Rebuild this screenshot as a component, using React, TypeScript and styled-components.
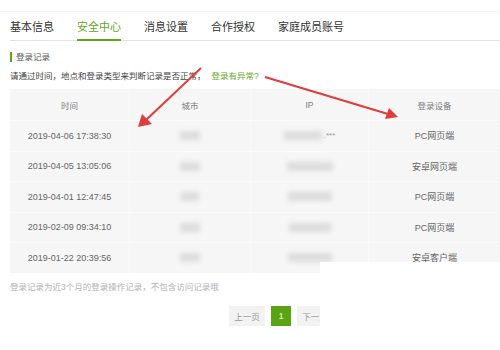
import { Fragment } from "react";
import styled, { createGlobalStyle } from "styled-components";

const GlobalStyle = createGlobalStyle`
  body {
    margin: 0;
    background: #fff;
    font-family: "Liberation Sans", "Noto Sans CJK SC", sans-serif;
  }
`;

const GREEN = "#5fa51c";

interface LoginRecord {
  time: string;
  cityWidth: number;
  ipWidth: number;
  masked?: boolean;
  device: string;
}

const records: LoginRecord[] = [
  { time: "2019-04-06 17:38:30", cityWidth: 20, ipWidth: 38, masked: true, device: "PC网页端" },
  { time: "2019-04-05 13:05:06", cityWidth: 20, ipWidth: 46, device: "安卓网页端" },
  { time: "2019-04-01 12:47:45", cityWidth: 18, ipWidth: 44, device: "PC网页端" },
  { time: "2019-02-09 09:34:10", cityWidth: 20, ipWidth: 42, device: "PC网页端" },
  { time: "2019-01-22 20:39:56", cityWidth: 20, ipWidth: 44, device: "安卓客户端" },
];

const tabs = ["基本信息", "安全中心", "消息设置", "合作授权", "家庭成员账号"];

const Page = styled.div`
  position: relative;
  width: 500px;
  height: 350px;
  overflow: hidden;
  padding-left: 10px;
  box-sizing: border-box;
`;

const TopRule = styled.div`
  height: 11px;
  margin-left: -10px;
  border-bottom: 1px solid #f4f4f4;
`;

const Tabs = styled.div`
  display: flex;
  gap: 23px;
  height: 28px;
  border-bottom: 1px solid #e3e3e3;
`;

const Tab = styled.div<{ $active?: boolean }>`
  display: flex;
  align-items: center;
  font-size: 11px;
  color: ${({ $active }) => ($active ? GREEN : "#333")};
  border-bottom: 2px solid ${({ $active }) => ($active ? GREEN : "transparent")};
  margin-bottom: -1px;
`;

const SectionTitle = styled.div`
  margin-top: 11px;
  border-left: 2px solid ${GREEN};
  padding-left: 4px;
  font-size: 8.5px;
  line-height: 10px;
  color: #555;
`;

const Desc = styled.div`
  margin-top: 9px;
  font-size: 8.5px;
  line-height: 10px;
  color: #444;
`;

const Link = styled.span`
  margin-left: 6px;
  color: #6aaa2e;
`;

const Table = styled.div`
  margin-top: 8px;
  display: grid;
  grid-template-columns: 119px 121px 118px 1fr;
  background: #f6f6f6;
`;

const Cell = styled.div<{ $head?: boolean; $first?: boolean }>`
  height: ${({ $head }) => ($head ? "31px" : "30.5px")};
  display: flex;
  align-items: center;
  justify-content: center;
  box-sizing: border-box;
  font-size: ${({ $head }) => ($head ? "8.5px" : "9px")};
  color: ${({ $head }) => ($head ? "#808080" : "#666")};
  border-top: ${({ $head }) => ($head ? "none" : "1px solid #fbfbfb")};
  border-left: ${({ $first }) => ($first ? "none" : "1px solid #fafafa")};
`;

const Blur = styled.span<{ $w: number }>`
  display: inline-block;
  width: ${({ $w }) => $w}px;
  height: 9px;
  background: #dcdcdc;
  filter: blur(2.5px);
`;

const IpBox = styled.div`
  display: flex;
  align-items: center;
  gap: 2px;
  color: #999;
  font-size: 8px;
`;

const Note = styled.div`
  margin-top: 9px;
  font-size: 8.5px;
  line-height: 10px;
  color: #b2b2b2;
`;

const Pager = styled.div`
  margin-top: 14px;
  padding-left: 219px;
  display: flex;
  gap: 6px;
`;

const PageButton = styled.div<{ $active?: boolean; $w: number }>`
  width: ${({ $w }) => $w}px;
  height: 20px;
  display: flex;
  align-items: center;
  justify-content: center;
  font-size: 8.5px;
  color: ${({ $active }) => ($active ? "#fff" : "#999")};
  background: ${({ $active }) => ($active ? "#5aa414" : "#f2f2f2")};
`;

const Cover = styled.div`
  position: absolute;
  left: 320px;
  top: 262px;
  right: 0;
  bottom: 0;
  background: #fff;
`;

const Arrows = styled.svg`
  position: absolute;
  left: 0;
  top: 0;
  pointer-events: none;
`;

export default function App() {
  return (
    <Page>
      <GlobalStyle />
      <TopRule />
      <Tabs>
        {tabs.map((t) => (
          <Tab key={t} $active={t === "安全中心"}>{t}</Tab>
        ))}
      </Tabs>
      <SectionTitle>登录记录</SectionTitle>
      <Desc>
        请通过时间，地点和登录类型来判断记录是否正常，
        <Link>登录有异常?</Link>
      </Desc>
      <Table>
        <Cell $head $first>时间</Cell>
        <Cell $head>城市</Cell>
        <Cell $head>IP</Cell>
        <Cell $head>登录设备</Cell>
        {records.map((r) => (
          <Fragment key={r.time}>
            <Cell $first>{r.time}</Cell>
            <Cell><Blur $w={r.cityWidth} /></Cell>
            <Cell>
              <IpBox>
                <Blur $w={r.ipWidth} />
                {r.masked && <span>.***</span>}
              </IpBox>
            </Cell>
            <Cell>{r.device}</Cell>
          </Fragment>
        ))}
      </Table>
      <Note>登录记录为近3个月的登录操作记录，不包含访问记录哦</Note>
      <Pager>
        <PageButton $w={36}>上一页</PageButton>
        <PageButton $w={20} $active>1</PageButton>
        <PageButton $w={36}>下一页</PageButton>
      </Pager>
      <Cover />
      <Arrows width="500" height="350" viewBox="0 0 500 350">
        <line x1="201" y1="68" x2="146" y2="120" stroke="#e23b3b" strokeWidth="2" />
        <polygon points="138,127 142,114 152,124" fill="#e23b3b" />
        <line x1="265" y1="77" x2="388" y2="114" stroke="#e23b3b" strokeWidth="2" />
        <polygon points="398,117 385,119 389,108" fill="#e23b3b" />
      </Arrows>
    </Page>
  );
}
